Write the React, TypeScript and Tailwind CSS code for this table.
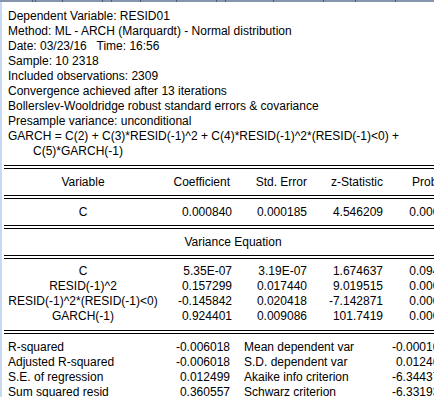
import React from "react";

const headerLines = [
  "Dependent Variable: RESID01",
  "Method: ML - ARCH (Marquardt) - Normal distribution",
  "Date: 03/23/16   Time: 16:56",
  "Sample: 10 2318",
  "Included observations: 2309",
  "Convergence achieved after 13 iterations",
  "Bollerslev-Wooldridge robust standard errors & covariance",
  "Presample variance: unconditional",
  "GARCH = C(2) + C(3)*RESID(-1)^2 + C(4)*RESID(-1)^2*(RESID(-1)<0) +",
];

const varianceRows = [
  ["C", "5.35E-07", "3.19E-07", "1.674637", "0.0940"],
  ["RESID(-1)^2", "0.157299", "0.017440", "9.019515", "0.0000"],
  ["RESID(-1)^2*(RESID(-1)<0)", "-0.145842", "0.020418", "-7.142871", "0.0000"],
  ["GARCH(-1)", "0.924401", "0.009086", "101.7419", "0.0000"],
];

const statRows = [
  ["R-squared", "-0.006018", "Mean dependent var", "-0.000105"],
  ["Adjusted R-squared", "-0.006018", "S.D. dependent var", "0.012462"],
  ["S.E. of regression", "0.012499", "Akaike info criterion", "-6.344371"],
  ["Sum squared resid", "0.360557", "Schwarz criterion", "-6.331934"],
];

function DoubleRule() {
  return <div className="h-[4px] border-y border-black" />;
}

function CoefRow({ cells, tall }: { cells: string[]; tall?: boolean }) {
  return (
    <div className={`flex items-center ${tall ? "h-[26px]" : "h-[15px]"}`}>
      <div className="w-[158px] text-center">{cells[0]}</div>
      <div className="w-[70px] text-right">{cells[1]}</div>
      <div className="w-[75px] text-right">{cells[2]}</div>
      <div className="w-[76px] text-right">{cells[3]}</div>
      <div className="w-[63px] text-right">{cells[4]}</div>
    </div>
  );
}

// Column header strip of the spreadsheet pane behind the output
function TopRule() {
  const cells = ["w-[33px]", "w-[3px]", "w-[27px]", "w-[40px]", "w-[9px]", "w-[29px]", "w-[36px]", "w-[40px]", "w-[9px]", "w-[48px]", "w-[50px]", "w-[32px]", "w-[40px]"];
  return (
    <div className="h-[2px] shrink-0 flex bg-[#8595ae]">
      {cells.map((w, i) => (
        <div key={i} className={`${w} h-full border-r border-[#4d5b72]`} />
      ))}
    </div>
  );
}

export default function App() {
  return (
    <div className="w-[434px] h-[397px] overflow-hidden bg-white flex flex-col font-['Liberation_Sans',Arial,sans-serif] text-[12px] leading-[15px] text-black">
      <TopRule />
      <div className="flex flex-1 min-h-0">
        <div className="w-[2px] shrink-0 bg-[#c6d9f0]" />
        <div className="flex-1 min-w-0 overflow-hidden">
          <div className="pt-[7px] pl-[6px] whitespace-nowrap">
            {headerLines.map((l) => (
              <div key={l} className="h-[15px] whitespace-pre">{l}</div>
            ))}
            <div className="h-[15px] pl-[25px]">C(5)*GARCH(-1)</div>
          </div>

          <div className="mt-[6px] ml-[2px] w-[458px] whitespace-nowrap">
            <DoubleRule />
            <div className="flex items-center h-[26px]">
              <div className="w-[158px] text-center">Variable</div>
              <div className="w-[70px] text-right pr-[2px]">Coefficient</div>
              <div className="w-[75px] text-right">Std. Error</div>
              <div className="w-[76px] text-right">z-Statistic</div>
              <div className="w-[63px] pl-[29px]">Prob.</div>
            </div>
            <DoubleRule />
            <CoefRow tall cells={["C", "0.000840", "0.000185", "4.546209", "0.0000"]} />
            <DoubleRule />
            <div className="h-[26px] flex items-center justify-center">Variance Equation</div>
            <DoubleRule />
            <div className="pt-[5px] pb-[6px]">
              {varianceRows.map((r) => (
                <CoefRow key={r[0]} cells={r} />
              ))}
            </div>
            <DoubleRule />
            <div className="pt-[6px]">
              {statRows.map((r) => (
                <div key={r[0]} className="flex h-[15px]">
                  <div className="w-[226px] flex justify-between pl-[4px]">
                    <span>{r[0]}</span>
                    <span>{r[1]}</span>
                  </div>
                  <div className="w-[216px] flex justify-between pl-[14px]">
                    <span>{r[2]}</span>
                    <span>{r[3]}</span>
                  </div>
                </div>
              ))}
            </div>
          </div>
        </div>
      </div>
    </div>
  );
}
